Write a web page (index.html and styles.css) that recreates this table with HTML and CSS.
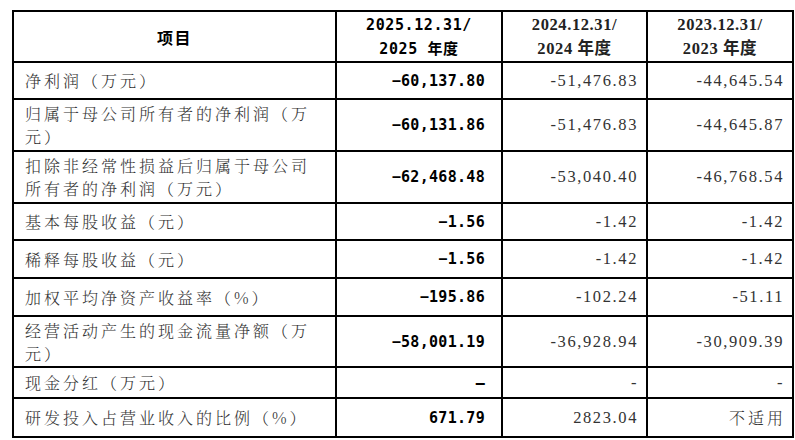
FILE: index.html
```html
<!DOCTYPE html>
<html lang="zh-CN">
<head>
<meta charset="utf-8">
<title>主要财务数据</title>
<link rel="stylesheet" href="styles.css">
</head>
<body>
<div class="page">
<table class="fin">
  <colgroup>
    <col class="c-label">
    <col class="c-cur">
    <col class="c-prev">
    <col class="c-prev2">
  </colgroup>
  <thead>
    <tr class="h-head">
      <th class="th-item">项目</th>
      <th class="th-cur">2025.12.31/<br>2025 年度</th>
      <th class="th-prev">2024.12.31/<br>2024 年度</th>
      <th class="th-prev">2023.12.31/<br>2023 年度</th>
    </tr>
  </thead>
  <tbody>
    <tr class="h-37">
      <td class="label">净利润（万元）</td>
      <td class="cur">−60,137.80</td>
      <td class="prev">-51,476.83</td>
      <td class="prev">-44,645.54</td>
    </tr>
    <tr class="h-52">
      <td class="label">归属于母公司所有者的净利润（万元）</td>
      <td class="cur">−60,131.86</td>
      <td class="prev">-51,476.83</td>
      <td class="prev">-44,645.87</td>
    </tr>
    <tr class="h-52">
      <td class="label">扣除非经常性损益后归属于母公司所有者的净利润（万元）</td>
      <td class="cur">−62,468.48</td>
      <td class="prev">-53,040.40</td>
      <td class="prev">-46,768.54</td>
    </tr>
    <tr class="h-37">
      <td class="label">基本每股收益（元）</td>
      <td class="cur">−1.56</td>
      <td class="prev">-1.42</td>
      <td class="prev">-1.42</td>
    </tr>
    <tr class="h-38">
      <td class="label">稀释每股收益（元）</td>
      <td class="cur">−1.56</td>
      <td class="prev">-1.42</td>
      <td class="prev">-1.42</td>
    </tr>
    <tr class="h-38">
      <td class="label">加权平均净资产收益率（%）</td>
      <td class="cur">−195.86</td>
      <td class="prev">-102.24</td>
      <td class="prev">-51.11</td>
    </tr>
    <tr class="h-51">
      <td class="label">经营活动产生的现金流量净额（万元）</td>
      <td class="cur">−58,001.19</td>
      <td class="prev">-36,928.94</td>
      <td class="prev">-30,909.39</td>
    </tr>
    <tr class="h-31">
      <td class="label">现金分红（万元）</td>
      <td class="cur">–</td>
      <td class="prev">-</td>
      <td class="prev">-</td>
    </tr>
    <tr class="h-39">
      <td class="label">研发投入占营业收入的比例（%）</td>
      <td class="cur">671.79</td>
      <td class="prev">2823.04</td>
      <td class="prev cjk">不适用</td>
    </tr>
  </tbody>
</table>
</div>
</body>
</html>
```

FILE: styles.css
```css
html, body {
  margin: 0;
  padding: 0;
  background: #ffffff;
}

.page {
  padding: 10px 0 0 12px;
}

.fin {
  border-collapse: collapse;
  table-layout: fixed;
  width: 781px;
  border: 2px solid #000;
}

.c-label { width: 323px; }
.c-cur { width: 166px; }
.c-prev { width: 145px; }
.c-prev2 { width: 146px; }

.fin th,
.fin td {
  border: 2px solid #000;
  padding: 0;
  vertical-align: middle;
}

.h-head { height: 51px; }
.h-37 { height: 37px; }
.h-38 { height: 38px; }
.h-39 { height: 39px; }
.h-31 { height: 31px; }
.h-51 { height: 51px; }
.h-52 { height: 52px; }

.fin .th-item {
  font-family: "Noto Sans CJK SC", sans-serif;
  font-weight: 700;
  font-size: 16px;
  letter-spacing: 1.5px;
  color: #000;
  text-align: center;
}

.fin .th-cur {
  font-family: "DejaVu Sans Mono", "Noto Sans CJK SC", monospace;
  font-weight: 700;
  font-size: 15px;
  line-height: 24px;
  letter-spacing: 0.6px;
  color: #000;
  text-align: center;
}

.fin .th-prev {
  font-family: "Liberation Serif", "Noto Sans CJK SC", serif;
  font-weight: 700;
  font-size: 16.5px;
  line-height: 24px;
  letter-spacing: 0.6px;
  color: #222;
  text-align: center;
}

.fin .label {
  font-family: "Noto Serif CJK SC", "Noto Sans CJK SC", serif;
  font-weight: 300;
  font-size: 16px;
  letter-spacing: 3px;
  line-height: 23px;
  color: #333;
  text-align: left;
  padding: 0 14px 0 11px;
}

.fin .cur {
  font-family: "DejaVu Sans Mono", monospace;
  font-weight: 700;
  font-size: 15px;
  letter-spacing: 0.3px;
  color: #000;
  text-align: right;
  padding-right: 16px;
}

.fin .prev {
  font-family: "Liberation Serif", serif;
  font-size: 16.5px;
  letter-spacing: 1.6px;
  color: #333;
  text-align: right;
  padding-right: 8px;
}

.fin .prev.cjk {
  font-family: "Noto Serif CJK SC", "Noto Sans CJK SC", serif;
  font-weight: 300;
  font-size: 16px;
  letter-spacing: 3px;
  padding-right: 6px;
}
```
